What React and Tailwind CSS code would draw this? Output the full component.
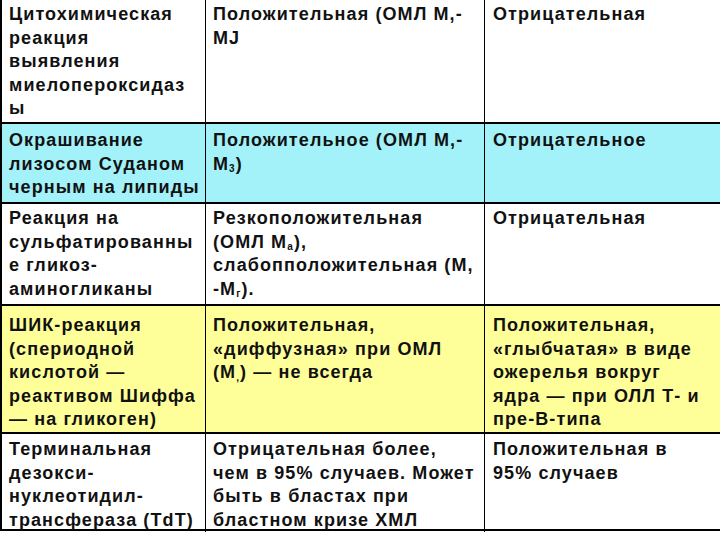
const rows = [
  {
    bg: "bg-white",
    h: "h-[124px]",
    pt: "pt-[3px]",
    cells: [
      ["Цитохимическая", "реакция", "выявления", "миелопероксидаз", "ы"],
      ["Положительная (ОМЛ М,-", "MJ"],
      ["Отрицательная"],
    ],
  },
  {
    bg: "bg-[#a3f2fa]",
    h: "h-[80px]",
    pt: "pt-[5px]",
    cells: [
      ["Окрашивание", "лизосом Суданом", "черным на липиды"],
      [
        "Положительное (ОМЛ М,-",
        <>
          М<sub className="text-[10px]">3</sub>)
        </>,
      ],
      ["Отрицательное"],
    ],
  },
  {
    bg: "bg-white",
    h: "h-[102px]",
    pt: "pt-[3px]",
    cells: [
      ["Реакция на", "сульфатированны", "е гликоз-", "аминогликаны"],
      [
        "Резкоположительная",
        <>
          (ОМЛ М<sub className="text-[10px]">а</sub>),
        </>,
        "слабопположительная (М,",
        <>
          -М<sub className="text-[10px]">г</sub>).
        </>,
      ],
      ["Отрицательная"],
    ],
  },
  {
    bg: "bg-[#ffff99]",
    h: "h-[128px]",
    pt: "pt-[8px]",
    cells: [
      ["ШИК-реакция", "(спериодной", "кислотой —", "реактивом Шиффа", "— на гликоген)"],
      [
        "Положительная,",
        "«диффузная» при ОМЛ",
        <>
          (М<sub className="text-[10px]">,</sub>) — не всегда
        </>,
      ],
      ["Положительная,", "«глыбчатая» в виде", "ожерелья вокруг", "ядра — при ОЛЛ Т- и", "пре-В-типа"],
    ],
  },
  {
    bg: "bg-white",
    h: "h-[97px]",
    pt: "pt-[4px]",
    cells: [
      ["Терминальная", "дезокси-", "нуклеотидил-", "трансфераза (TdT)"],
      ["Отрицательная более,", "чем в 95% случаев. Может", "быть в бластах при", "бластном кризе ХМЛ"],
      ["Положительная в", "95% случаев"],
    ],
  },
];

function Cell({ lines, last, pt }) {
  return (
    <div className={`${pt} ${last ? "pl-[8px]" : "border-r-[1.5px] border-black pl-[7px]"}`}>
      {lines.map((l, i) => (
        <div key={i} className="whitespace-nowrap">
          {l}
        </div>
      ))}
    </div>
  );
}

export default function App() {
  return (
    <div
      className="w-[720px] h-[540px] overflow-hidden bg-white text-[18px] font-bold leading-[23.5px] tracking-[1.1px] text-[#111]"
      style={{ fontFamily: '"Liberation Sans", Arial, sans-serif' }}
    >
      <div className="border-l-2 border-black w-[720px]">
        {rows.map((r, i) => (
          <div
            key={i}
            className={`grid grid-cols-[204px_279px_1fr] ${r.bg} ${r.h} border-b-2 border-black`}
          >
            {r.cells.map((c, j) => (
              <Cell key={j} lines={c} last={j === 2} pt={r.pt} />
            ))}
          </div>
        ))}
      </div>
    </div>
  );
}
